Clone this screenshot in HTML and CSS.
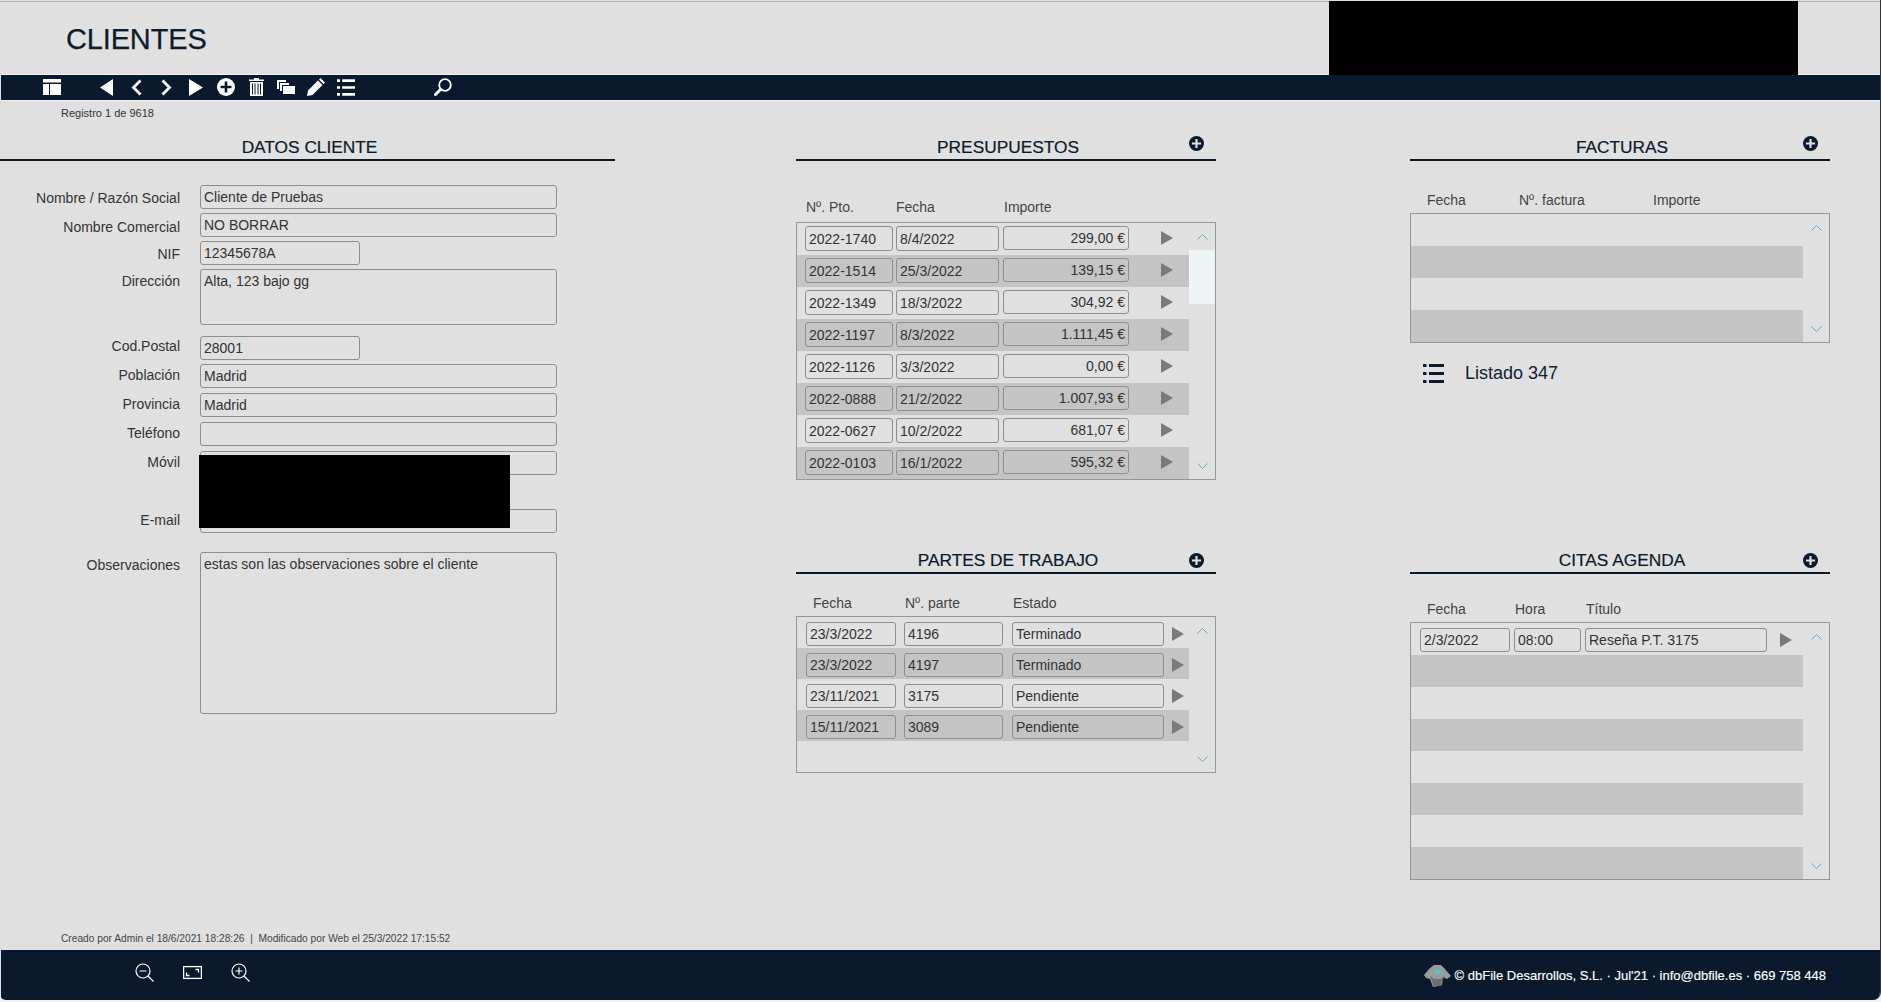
FILE: index.html
```html
<!DOCTYPE html>
<html lang="es">
  <head>
    <meta charset="UTF-8" />
    <title>Clientes</title>
    <link rel="stylesheet" href="styles.css">
  </head>
  <body>
    <svg class="sprites" width="0" height="0">
      <symbol id="i-plus" viewBox="0 0 18 18">
        <circle cx="9" cy="9" r="9" fill="currentColor" />
        <path d="M9 3.5v11M3.5 9h11" stroke="var(--plus-cross)" stroke-width="2.6" />
      </symbol>
      <symbol id="i-list" viewBox="0 0 21 19">
        <path fill="currentColor" d="M0 0h3.5v3H0zM6 0h15v3H6zM0 8h3.5v3H0zM6 8h15v3H6zM0 16h3.5v3H0zM6 16h15v3H6z" />
      </symbol>
      <symbol id="i-arrow" viewBox="0 0 12 14">
        <path fill="currentColor" d="M0 0l12 7L0 14z" />
      </symbol>
      <symbol id="i-up" viewBox="0 0 11 6">
        <path fill="none" stroke="currentColor" d="M.5 5.5l5-5 5 5" />
      </symbol>
      <symbol id="i-down" viewBox="0 0 11 6">
        <path fill="none" stroke="currentColor" d="M.5 .5l5 5 5-5" />
      </symbol>
    </svg>

    <div class="app">
      <header class="top">
        <h1>CLIENTES</h1>
        <div class="blackout blackout-top"></div>
      </header>

      <nav class="toolbar">
        <svg class="tool t-layout" viewBox="0 0 18 16"><path fill="#fff" d="M0 0h18v3.5H0zM0 5h6v11H0zM7 5h11v11H7z" /></svg>
        <svg class="tool t-first" viewBox="0 0 13 17"><path fill="#fff" d="M13 0v17L0 8.5z" /></svg>
        <svg class="tool t-prev" viewBox="0 0 11 17"><path fill="none" stroke="#fff" stroke-width="2.8" d="M9.5 1.5l-7 7 7 7" /></svg>
        <svg class="tool t-next" viewBox="0 0 11 17"><path fill="none" stroke="#fff" stroke-width="2.8" d="M1.5 1.5l7 7-7 7" /></svg>
        <svg class="tool t-last" viewBox="0 0 14 17"><path fill="#fff" d="M0 0v17l14-8.5z" /></svg>
        <svg class="tool t-plus"><use href="#i-plus" /></svg>
        <svg class="tool t-trash" viewBox="0 0 15 18">
          <path fill="#fff" d="M5 0h5v1.5h5V3H0V1.5h5zM1 4h13v14H1z" />
          <path stroke="#0a1a2c" d="M3.5 5.5v11M6 5.5v11M9 5.5v11M11.5 5.5v11" />
        </svg>
        <svg class="tool t-copy" viewBox="0 0 18 14">
          <path fill="#fff" d="M0 0h9v2H2v7H0zM3 3h9v2H5v6H3zM6 6h12v8H6z" />
        </svg>
        <svg class="tool t-pencil" viewBox="0 0 18 18">
          <path fill="#fff" d="M13.5 0L18 4.5 16.5 6 12 1.500zM11 2.5L15.500 7l-10 10L0 18l1-5.5z" />
        </svg>
        <svg class="tool t-list"><use href="#i-list" /></svg>
        <svg class="tool t-search" viewBox="0 0 18 18">
          <circle cx="11" cy="7" r="5.8" fill="none" stroke="#fff" stroke-width="1.8" />
          <path d="M6.5 11.5l-5 5" stroke="#fff" stroke-width="3" stroke-linecap="round" />
        </svg>
      </nav>

      <p class="record">Registro 1 de 9618</p>

      <main class="main">
        <section class="col col-datos">
          <div class="panel-head"><h2>DATOS CLIENTE</h2></div>
          <div class="form">
            <div class="form-row"><span class="label p5">Nombre / Razón Social</span><div class="field wide">Cliente de Pruebas</div></div>
            <div class="form-row"><span class="label p6">Nombre Comercial</span><div class="field wide">NO BORRAR</div></div>
            <div class="form-row"><span class="label p5">NIF</span><div class="field short">12345678A</div></div>
            <div class="form-row"><span class="label p4">Dirección</span><div class="field wide area-s">Alta, 123 bajo gg</div></div>
            <div class="form-row mt11"><span class="label p2">Cod.Postal</span><div class="field short">28001</div></div>
            <div class="form-row"><span class="label">Población</span><div class="field wide">Madrid</div></div>
            <div class="form-row mt5"><span class="label">Provincia</span><div class="field wide">Madrid</div></div>
            <div class="form-row mt5"><span class="label">Teléfono</span><div class="field wide"></div></div>
            <div class="form-row mt5"><span class="label">Móvil</span><div class="field wide"></div></div>
            <div class="form-row mt34"><span class="label">E-mail</span><div class="field wide"></div></div>
            <div class="form-row mt19"><span class="label p5">Observaciones</span><div class="field wide area-l">estas son las observaciones sobre el cliente</div></div>
          </div>
          <div class="blackout blackout-form"></div>
        </section>

        <div class="col col-mid">
          <section class="panel">
            <div class="panel-head"><h2>PRESUPUESTOS</h2><svg class="add"><use href="#i-plus" /></svg></div>
            <div class="cols cols-pto"><span>Nº. Pto.</span><span>Fecha</span><span>Importe</span></div>
            <div class="list">
              <div class="rows">
                <div class="row row-pto"><div class="field">2022-1740</div><div class="field">8/4/2022</div><div class="field num">299,00 €</div><svg class="go"><use href="#i-arrow" /></svg></div>
                <div class="row row-pto"><div class="field">2022-1514</div><div class="field">25/3/2022</div><div class="field num">139,15 €</div><svg class="go"><use href="#i-arrow" /></svg></div>
                <div class="row row-pto"><div class="field">2022-1349</div><div class="field">18/3/2022</div><div class="field num">304,92 €</div><svg class="go"><use href="#i-arrow" /></svg></div>
                <div class="row row-pto"><div class="field">2022-1197</div><div class="field">8/3/2022</div><div class="field num">1.111,45 €</div><svg class="go"><use href="#i-arrow" /></svg></div>
                <div class="row row-pto"><div class="field">2022-1126</div><div class="field">3/3/2022</div><div class="field num">0,00 €</div><svg class="go"><use href="#i-arrow" /></svg></div>
                <div class="row row-pto"><div class="field">2022-0888</div><div class="field">21/2/2022</div><div class="field num">1.007,93 €</div><svg class="go"><use href="#i-arrow" /></svg></div>
                <div class="row row-pto"><div class="field">2022-0627</div><div class="field">10/2/2022</div><div class="field num">681,07 €</div><svg class="go"><use href="#i-arrow" /></svg></div>
                <div class="row row-pto"><div class="field">2022-0103</div><div class="field">16/1/2022</div><div class="field num">595,32 €</div><svg class="go"><use href="#i-arrow" /></svg></div>
              </div>
              <div class="scroll">
                <svg class="chev"><use href="#i-up" /></svg>
                <div class="thumb"></div>
                <svg class="chev down"><use href="#i-down" /></svg>
              </div>
            </div>
          </section>

          <section class="panel panel-low">
            <div class="panel-head head-low"><h2>PARTES DE TRABAJO</h2><svg class="add"><use href="#i-plus" /></svg></div>
            <div class="cols cols-partes"><span>Fecha</span><span>Nº. parte</span><span>Estado</span></div>
            <div class="list list-partes">
              <div class="rows">
                <div class="row row-partes"><div class="field">23/3/2022</div><div class="field">4196</div><div class="field">Terminado</div><svg class="go"><use href="#i-arrow" /></svg></div>
                <div class="row row-partes"><div class="field">23/3/2022</div><div class="field">4197</div><div class="field">Terminado</div><svg class="go"><use href="#i-arrow" /></svg></div>
                <div class="row row-partes"><div class="field">23/11/2021</div><div class="field">3175</div><div class="field">Pendiente</div><svg class="go"><use href="#i-arrow" /></svg></div>
                <div class="row row-partes"><div class="field">15/11/2021</div><div class="field">3089</div><div class="field">Pendiente</div><svg class="go"><use href="#i-arrow" /></svg></div>
              </div>
              <div class="scroll">
                <svg class="chev"><use href="#i-up" /></svg>
                <svg class="chev down"><use href="#i-down" /></svg>
              </div>
            </div>
          </section>
        </div>

        <div class="col col-right">
          <section class="panel">
            <div class="panel-head"><h2>FACTURAS</h2><svg class="add"><use href="#i-plus" /></svg></div>
            <div class="cols cols-fact"><span>Fecha</span><span>Nº. factura</span><span>Importe</span></div>
            <div class="list">
              <div class="rows">
                <div class="row"></div>
                <div class="row"></div>
                <div class="row"></div>
                <div class="row"></div>
              </div>
              <div class="scroll">
                <svg class="chev"><use href="#i-up" /></svg>
                <svg class="chev down"><use href="#i-down" /></svg>
              </div>
            </div>
            <div class="listado">
              <svg class="listado-icon"><use href="#i-list" /></svg>
              <span>Listado 347</span>
            </div>
          </section>

          <section class="panel panel-citas">
            <div class="panel-head head-low"><h2>CITAS AGENDA</h2><svg class="add"><use href="#i-plus" /></svg></div>
            <div class="cols cols-citas"><span>Fecha</span><span>Hora</span><span>Título</span></div>
            <div class="list">
              <div class="rows">
                <div class="row row-citas"><div class="field">2/3/2022</div><div class="field">08:00</div><div class="field">Reseña P.T. 3175</div><svg class="go"><use href="#i-arrow" /></svg></div>
                <div class="row"></div>
                <div class="row"></div>
                <div class="row"></div>
                <div class="row"></div>
                <div class="row"></div>
                <div class="row"></div>
                <div class="row"></div>
              </div>
              <div class="scroll">
                <svg class="chev"><use href="#i-up" /></svg>
                <svg class="chev down"><use href="#i-down" /></svg>
              </div>
            </div>
          </section>
        </div>
      </main>

      <p class="status">Creado por Admin el 18/6/2021 18:28:26&nbsp; |&nbsp; Modificado por Web el 25/3/2022 17:15:52</p>

      <footer class="bottom">
        <div class="zoom-tools">
          <svg class="zt" viewBox="0 0 19 19">
            <circle cx="8" cy="8" r="7" fill="none" stroke="#fff" stroke-width="1.2" />
            <path d="M13 13l5.5 5.5M4.5 8h7" stroke="#fff" stroke-width="1.2" />
          </svg>
          <svg class="zt" viewBox="0 0 19 19">
            <rect x=".6" y="3.6" width="17.8" height="11.8" fill="none" stroke="#fff" stroke-width="1.3" />
            <path d="M3.5 9.5v3h3M15.5 9.5v-3h-3" fill="none" stroke="#fff" stroke-width="1.3" />
          </svg>
          <svg class="zt" viewBox="0 0 19 19">
            <circle cx="8" cy="8" r="7" fill="none" stroke="#fff" stroke-width="1.2" />
            <path d="M13 13l5.5 5.5M4.5 8h7M8 4.5v7" stroke="#fff" stroke-width="1.2" />
          </svg>
        </div>
        <div class="brand">
          <svg class="logo" viewBox="0 0 28 23">
            <path fill="#9a9b9d" d="M1 11l6-7 4-3 7 0 3 3 7 8-4 3-4-2-1 8-9 2-3-8-4-1z" />
            <path fill="#6c6e70" d="M7 12l4 3h7l3-3 .500 2-2.500 1-1 6.500-7 1.500-2.500-7z" />
            <ellipse cx="14.500" cy="8" rx="3.500" ry="2.500" fill="#52c3cf" />
          </svg>
          <span>© dbFile Desarrollos, S.L. · Jul'21 · info@dbfile.es · 669 758 448</span>
        </div>
      </footer>
    </div>
  </body>
</html>
```

FILE: styles.css
```css
:root {
  --navy: #0a1a2c;
  --plus-cross: #e0e0e0;
}

body {
  margin: 0;
  background-color: #f0f0f0;
  font-family: "Liberation Sans", Arial, sans-serif;
  color: #333;
}

.sprites {
  position: absolute;
}

.app {
  display: flex;
  flex-direction: column;
  box-sizing: border-box;
  height: 1000px;
  padding-top: 1px;
  overflow: hidden;
  background-color: #e0e0e0;
  border-right: 1px solid #333;
  border-radius: 0 0 8px 6px;
}

.top {
  position: relative;
  flex: none;
  height: 73px;
  border-top: 1px solid #b4b4b4;
}

h1 {
  margin: 0;
  padding: 20px 0 0 66px;
  font-size: 29px;
  line-height: 34px;
  font-weight: normal;
  letter-spacing: -0.15px;
  color: #0c1c30;
  -webkit-text-stroke: 0.25px #0c1c30;
}

.blackout {
  position: absolute;
  background-color: #000;
}

.blackout-top {
  left: 1329px;
  top: -1px;
  width: 469px;
  height: 74px;
}

.blackout-form {
  left: 199px;
  top: 325px;
  width: 311px;
  height: 73px;
}

.toolbar {
  flex: none;
  box-sizing: border-box;
  height: 25px;
  padding-bottom: 1px;
  margin-left: 1px;
  display: flex;
  align-items: center;
  background-color: var(--navy);
  box-shadow: 0 -1px 0 #eef4f6, 0 1px 0 #eef4f6;
}

.tool {
  flex: none;
}

.t-layout { width: 18px; height: 16px; margin-left: 42px; }
.t-first { width: 13px; height: 17px; margin-left: 39px; }
.t-prev { width: 11px; height: 17px; margin-left: 18px; }
.t-next { width: 11px; height: 17px; margin-left: 19px; }
.t-last { width: 14px; height: 17px; margin-left: 17px; }
.t-plus { width: 18px; height: 18px; margin-left: 14px; --plus-cross: var(--navy); color: #fff; }
.t-trash { width: 15px; height: 18px; margin-left: 14px; }
.t-copy { width: 18px; height: 14px; margin-left: 13px; }
.t-pencil { width: 18px; height: 18px; margin-left: 12px; }
.t-list { width: 18px; height: 17px; margin-left: 12px; color: #fff; }
.t-search { width: 18px; height: 18px; margin-left: 79px; }

.record {
  flex: none;
  margin: 0;
  height: 24px;
  padding: 6px 0 0 61px;
  font-size: 11px;
  line-height: 14px;
}

.main {
  position: relative;
  flex: 1;
  display: flex;
  align-items: flex-start;
}

.col-datos { width: 615px; }
.col-mid { width: 420px; margin-left: 181px; }
.col-right { width: 420px; margin-left: 194px; }

.panel-head {
  display: grid;
  grid-template-columns: 1fr auto 1fr;
  align-items: end;
  height: 29px;
  padding-left: 4px;
  border-bottom: 2px solid var(--navy);
}

.panel-head h2 {
  grid-column: 2;
  margin: 0;
  font-size: 17.3px;
  line-height: 20px;
  font-weight: normal;
  color: var(--navy);
  padding-bottom: 2px;
  -webkit-text-stroke: 0.2px var(--navy);
}

.add {
  grid-column: 3;
  justify-self: end;
  width: 15px;
  height: 15px;
  margin: 0 12px 8px 0;
  color: var(--navy);
}

.head-low .add {
  margin-bottom: 4px;
}

.panel-low {
  margin-top: 63px;
}

.panel-citas {
  margin-top: 159px;
}

.form {
  padding-top: 24px;
}

.form-row {
  display: flex;
  margin-top: 4px;
}

.form-row:first-child {
  margin-top: 0;
}

.form-row.mt5 { margin-top: 5px; }
.form-row.mt11 { margin-top: 11px; }
.form-row.mt19 { margin-top: 19px; }
.form-row.mt34 { margin-top: 34px; }

.label {
  flex: none;
  width: 180px;
  margin-right: 20px;
  padding-top: 3px;
  text-align: right;
  font-size: 14px;
  line-height: 16px;
}

.label.p2 { padding-top: 2px; }
.label.p4 { padding-top: 4px; }
.label.p5 { padding-top: 5px; }
.label.p6 { padding-top: 6px; }

.field {
  box-sizing: border-box;
  height: 24px;
  padding: 0 3px;
  border: 1px solid #8e8e8e;
  border-radius: 3px;
  font-size: 14px;
  line-height: 22px;
  white-space: nowrap;
  overflow: hidden;
}

.field.wide { width: 357px; }
.field.short { width: 160px; }
.field.area-s { height: 56px; }
.field.area-l { height: 162px; }
.field.num { text-align: right; }

.cols {
  display: grid;
  align-items: end;
  font-size: 14px;
  line-height: 16px;
  color: #444;
}

.cols-pto {
  grid-template-columns: 90px 108px 1fr;
  height: 54px;
  padding: 0 0 7px 10px;
}

.cols-partes {
  grid-template-columns: 92px 108px 1fr;
  height: 37px;
  padding: 0 0 5px 17px;
}

.cols-fact {
  grid-template-columns: 92px 134px 1fr;
  height: 47px;
  padding: 0 0 5px 17px;
}

.cols-citas {
  grid-template-columns: 88px 71px 1fr;
  height: 43px;
  padding: 0 0 5px 17px;
}

.list {
  display: flex;
  border: 1px solid #969696;
}

.rows {
  flex: none;
  width: 392px;
}

.list-partes {
  height: 155px;
}

.row {
  display: flex;
  align-items: flex-start;
  box-sizing: border-box;
  height: 32px;
  padding-top: 5px;
}

.row:nth-child(even) {
  background-color: #c4c4c4;
}

.row-pto { padding: 3px 0 0 8px; }
.row-pto .field { height: 25px; line-height: 24px; margin-right: 3px; }
.row-pto .field:nth-child(1) { width: 88px; }
.row-pto .field:nth-child(2) { width: 103px; margin-right: 4px; }
.row-pto .field:nth-child(3) { width: 126px; height: 24px; line-height: 22px; margin-right: 0; }
.row-pto .go { margin: 5px 0 0 32px; }

.row-partes { height: 31px; padding-left: 9px; }
.row-partes .field:nth-child(1) { width: 90px; margin-right: 8px; }
.row-partes .field:nth-child(2) { width: 99px; margin-right: 9px; }
.row-partes .field:nth-child(3) { width: 152px; }
.row-partes .go { margin: 5px 0 0 8px; }

.row-citas { padding-left: 9px; }
.row-citas .field:nth-child(1) { width: 90px; margin-right: 4px; }
.row-citas .field:nth-child(2) { width: 67px; margin-right: 4px; }
.row-citas .field:nth-child(3) { width: 182px; }
.row-citas .go { margin: 5px 0 0 13px; }

.go {
  flex: none;
  width: 12px;
  height: 14px;
  color: #7a7a7a;
}

.scroll {
  position: relative;
  flex: 1;
  color: #5fa8cf;
}

.chev {
  position: absolute;
  left: 8px;
  top: 11px;
  width: 11px;
  height: 6px;
}

.chev.down {
  top: auto;
  bottom: 10px;
}

.thumb {
  position: absolute;
  left: 0;
  right: 0;
  top: 27px;
  height: 54px;
  background-color: #eff5f7;
}

.listado {
  display: flex;
  align-items: center;
  padding: 19px 0 0 13px;
  font-size: 18px;
  line-height: 22px;
  color: #0f2033;
}

.listado-icon {
  width: 21px;
  height: 19px;
  margin-right: 21px;
  color: var(--navy);
}

.status {
  flex: none;
  box-sizing: border-box;
  margin: 0;
  height: 19px;
  padding: 1px 0 0 61px;
  font-size: 10.2px;
  line-height: 14px;
  color: #444;
}

.bottom {
  flex: none;
  height: 50px;
  margin-left: 1px;
  display: flex;
  align-items: center;
  justify-content: space-between;
  background-color: var(--navy);
  color: #fff;
}

.zoom-tools {
  display: flex;
  gap: 29px;
  margin: -5px 0 0 134px;
}

.zt {
  width: 19px;
  height: 19px;
}

.brand {
  display: flex;
  align-items: center;
  gap: 4px;
  margin-right: 54px;
  font-size: 13px;
  -webkit-text-stroke: 0.15px #fff;
}

.logo {
  width: 28px;
  height: 23px;
}
```
